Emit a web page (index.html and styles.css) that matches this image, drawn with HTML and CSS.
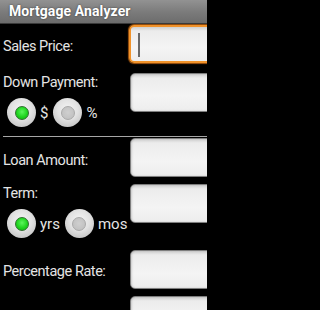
FILE: index.html
```html
<!DOCTYPE html>
<html>
<head>
<meta charset="utf-8">
<link rel="stylesheet" href="styles.css">
</head>
<body>
<div class="titlebar">Mortgage Analyzer</div>
<div class="form">
  <div class="row r1">
    <div class="left"><div class="label">Sales Price:</div></div>
    <div class="field focused"><span class="cursor"></span></div>
  </div>
  <div class="row r2">
    <div class="left">
      <div class="label">Down Payment:</div>
      <div class="radios">
        <span class="radio on"><span class="dot"></span></span><span class="rlabel">$</span>
        <span class="radio"><span class="dot"></span></span><span class="rlabel">%</span>
      </div>
    </div>
    <div class="field"></div>
  </div>
  <div class="sep"></div>
  <div class="row r3">
    <div class="left"><div class="label">Loan Amount:</div></div>
    <div class="field"></div>
  </div>
  <div class="row r4">
    <div class="left">
      <div class="label">Term:</div>
      <div class="radios">
        <span class="radio on"><span class="dot"></span></span><span class="rlabel">yrs</span>
        <span class="radio"><span class="dot"></span></span><span class="rlabel">mos</span>
      </div>
    </div>
    <div class="field"></div>
  </div>
  <div class="row r5">
    <div class="left"><div class="label">Percentage Rate:</div></div>
    <div class="field"></div>
  </div>
  <div class="row r6">
    <div class="left"></div>
    <div class="field"></div>
  </div>
</div>
</body>
</html>
```
FILE: styles.css
```css
html, body {
  margin: 0;
  padding: 0;
  background: #000;
  width: 207px;
  height: 310px;
  overflow: hidden;
  font-family: Roboto, "Open Sans", sans-serif;
}
.titlebar {
  height: 23px;
  line-height: 23px;
  padding-left: 9px;
  background: linear-gradient(#929292, #7c7c7c 50%, #6c6c6c);
  border-bottom: 1px solid #3a3a3a;
  color: #fff;
  font-weight: bold;
  font-size: 14px;
  letter-spacing: 0.1px;
  text-shadow: 0 0 2px rgba(0,0,0,0.6);
}
.form {
  width: 207px;
  height: 286px;
  overflow: hidden;
}
.row {
  display: flex;
  align-items: flex-start;
}
.left {
  flex: 0 0 127px;
  padding-left: 3px;
}
.label {
  color: #e4e4e4;
  font-size: 14.5px;
  letter-spacing: -0.45px;
  line-height: 18px;
  white-space: nowrap;
}
.field {
  flex: 0 0 120px;
  height: 37px;
  border: 1px solid #7e7e7e;
  border-radius: 5px;
  background: linear-gradient(#cfcfcf 0, #ececec 4px, #f4f4f4 60%, #ededed 100%);
  box-shadow: inset 1px 0 2px rgba(0,0,0,0.15);
  position: relative;
}
.field.focused {
  border: 2px solid #f0922a;
  box-shadow: 0 0 1px 1px rgba(230,120,20,0.7);
  height: 34px;
  margin-left: -1px;
}
.cursor {
  position: absolute;
  left: 7px;
  top: 6px;
  width: 2px;
  height: 24px;
  background: #6a6a6a;
}
.r1 .field { margin-top: 1px; }
.r1 .label { padding-top: 14px; }
.r2 .field { margin-top: 10px; }
.r2 .label { padding-top: 11px; }
.radios {
  display: flex;
  align-items: center;
  margin-top: 6px;
  padding-left: 4px;
  gap: 4px;
}
.rlabel {
  color: #e4e4e4;
  font-size: 15px;
  line-height: 18px;
  margin-right: 1px;
}
.radio {
  width: 29px;
  height: 29px;
  border-radius: 50%;
  box-sizing: border-box;
  background: radial-gradient(circle at 50% 40%, #f4f4f4 0, #e2e2e2 45%, #c6c6c6 80%, #a8a8a8 100%);
  display: flex;
  align-items: center;
  justify-content: center;
}
.dot {
  width: 14px;
  height: 14px;
  border-radius: 50%;
  box-sizing: border-box;
  background: radial-gradient(circle at 50% 45%, #cfcfcf, #bdbdbd);
  border: 1px solid #a9a9a9;
}
.radio.on .dot {
  background: radial-gradient(circle at 50% 40%, #5cf55c, #1fd41f 55%, #10a810);
  border: 1px solid #2f6f2f;
}
.sep {
  margin: 9px 0 0 3px;
  border-top: 1px solid #a6a6a6;
  height: 0;
}
.r3 .field { margin-top: 1px; }
.r3 .label { padding-top: 15px; }
.r4 .field { margin-top: 7px; }
.r4 .label { padding-top: 8px; }
.r4 .radios { margin-top: 6px; }
.r5 .field { margin-top: 12px; }
.r5 .label { padding-top: 25px; }
.r6 .field { margin-top: 7px; }
```
